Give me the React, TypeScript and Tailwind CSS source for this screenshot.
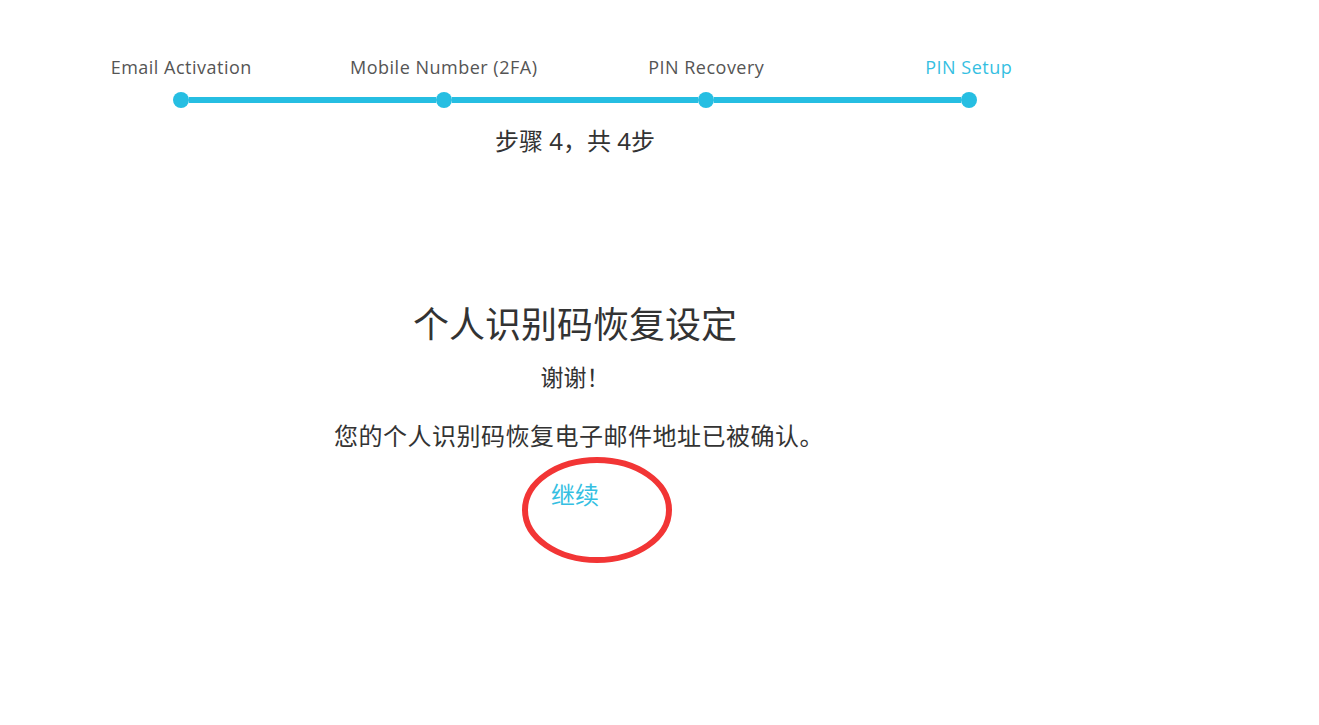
import React from "react";

const steps = [
  { label: "Email Activation", active: false },
  { label: "Mobile Number (2FA)", active: false },
  { label: "PIN Recovery", active: false },
  { label: "PIN Setup", active: true },
];

export default function App() {
  return (
    <div
      className="relative w-[1319px] h-[725px] bg-white overflow-hidden"
      style={{ fontFamily: '"Noto Sans", "Noto Sans CJK SC", sans-serif' }}
    >
      <div className="ml-[50px] w-[1050px] pt-[55px]">
        <div className="grid grid-cols-4">
          {steps.map((s, i) => (
            <div key={s.label} className="flex flex-col items-center">
              <div
                className={`text-[18px] leading-[24px] tracking-[0.5px] whitespace-nowrap ${
                  s.active ? "text-[#35bfe2]" : "text-[#555]"
                }`}
                style={{ fontFamily: '"Open Sans", "Noto Sans", sans-serif' }}
              >
                {s.label}
              </div>
              <div className="mt-[13px] flex w-full items-center">
                <div className={`h-[6px] flex-1 ${i === 0 ? "bg-transparent" : "bg-[#26bee2]"}`} />
                <div className="h-[16px] w-[16px] rounded-full bg-[#26bee2]" />
                <div className={`h-[6px] flex-1 ${i === steps.length - 1 ? "bg-transparent" : "bg-[#26bee2]"}`} />
              </div>
            </div>
          ))}
        </div>
        <div className="mt-[18px] text-center text-[24px] leading-[30px] text-[#333]">
          步骤 4，共 4步
        </div>
        <div className="mt-[147px] flex flex-col items-center text-[#333]">
          <h1 className="text-[36px] leading-[44px] font-normal">个人识别码恢复设定</h1>
          <p className="mt-[16px] text-[23px] leading-[28px]">谢谢！</p>
          <p className="mt-[29px] ml-[8px] text-[24px] leading-[32px] tracking-[0.5px]">您的个人识别码恢复电子邮件地址已被确认。</p>
          <a className="mt-[27px] text-[24px] leading-[32px] text-[#35bfe2] cursor-pointer">继续</a>
        </div>
      </div>
      <svg
        className="absolute left-[519px] top-[454px] pointer-events-none"
        width="156"
        height="112"
        viewBox="0 0 156 112"
      >
        <ellipse cx="78" cy="56" rx="72" ry="50" fill="none" stroke="#f23535" strokeWidth="6" />
      </svg>
    </div>
  );
}
